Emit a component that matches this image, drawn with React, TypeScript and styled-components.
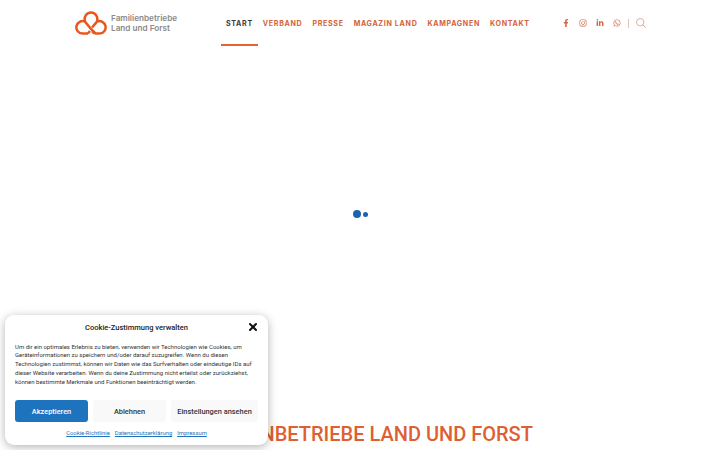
import styled, { createGlobalStyle } from "styled-components";
import { FaFacebookF, FaInstagram, FaLinkedinIn, FaWhatsapp } from "react-icons/fa";
import { X } from "lucide-react";

const GlobalStyle = createGlobalStyle`
    html, body {
        margin : 0;
        padding : 0;
        height : 100%;
        background-color : #ffffff;
        overflow : hidden;
    }
    #root {
        height : 100%;
    }
`;

const Page = styled.div`
    position : relative;
    display : flex;
    flex-direction : column;
    width : 720px;
    height : 450px;
    overflow : hidden;
    font-family : Roboto, "Liberation Sans", sans-serif;
`;

const Header = styled.header`
    display : flex;
    align-items : flex-start;
    height : 46px;
    padding-left : 75px;
`;

const LogoLink = styled.a`
    display : flex;
    align-items : center;
    gap : 4px;
    width : 146px;
    height : 46px;
    svg {
        width : 32px;
        height : 24px;
        flex-shrink : 0;
    }
`;

const LogoText = styled.span`
    margin-top : 1px;
    font-family : Inter, "Liberation Sans", sans-serif;
    font-size : 8.2px;
    font-weight : 600;
    line-height : 9.5px;
    color : #8a8a8a;
    white-space : nowrap;
`;

const Nav = styled.nav`
    display : flex;
    gap : 0;
`;

const NavItem = styled.a<{ $active?: boolean }>`
    display : flex;
    align-items : center;
    box-sizing : border-box;
    height : 46px;
    padding : 0 5px;
    font-family : Inter, "Liberation Sans", sans-serif;
    font-size : 7.1px;
    font-weight : 700;
    letter-spacing : 0.68px;
    white-space : nowrap;
    color : ${(p) => (p.$active ? "#3d3d3d" : "#d4623a")};
    box-shadow : ${(p) => (p.$active ? "inset 0 -2px 0 #e8602c" : "none")};
`;

const Socials = styled.div`
    display : flex;
    align-items : center;
    gap : 9px;
    height : 46px;
    margin-left : 27px;
`;

const SocialLink = styled.a`
    display : flex;
    justify-content : center;
    width : 8px;
    color : #d4663f;
    font-size : 8px;
`;

const Divider = styled.span`
    width : 1px;
    height : 9px;
    margin-left : -2px;
    background-color : #dcc4b8;
`;

const SearchIcon = styled.svg`
    width : 10px;
    height : 10px;
    margin-left : -2px;
    fill : none;
    stroke : #d9a48f;
    stroke-width : 0.9;
`;

const Loader = styled.div`
    display : flex;
    justify-content : center;
    align-items : center;
    gap : 2px;
    flex : 1;
    padding-bottom : 40px;
`;

const Dot = styled.span<{ $size: number }>`
    width : ${(p) => p.$size}px;
    height : ${(p) => p.$size}px;
    border-radius : 50%;
    background-color : #1b62b0;
`;

const Title = styled.h1`
    margin : 0 0 3px;
    font-size : 20px;
    font-weight : 500;
    line-height : 25px;
    text-align : center;
    color : #dd5f33;
    white-space : nowrap;
`;

const Banner = styled.section`
    position : absolute;
    left : 5px;
    top : 315px;
    display : flex;
    flex-direction : column;
    box-sizing : border-box;
    width : 263px;
    height : 130px;
    padding : 0 10px;
    border-radius : 9px;
    background-color : #ffffff;
    box-shadow : 0 2px 10px rgba(0, 0, 0, 0.3);
`;

const BannerHead = styled.div`
    position : relative;
    display : flex;
    justify-content : center;
    align-items : center;
    height : 23px;
    margin-top : 1px;
    font-size : 7.5px;
    font-weight : 500;
    color : #222222;
`;

const CloseButton = styled.span`
    position : absolute;
    right : -1px;
    top : 4.5px;
    display : flex;
    color : #111111;
`;

const BannerText = styled.p`
    margin : 3.5px 0 0;
    font-size : 6px;
    line-height : 8.75px;
    color : #333333;
    white-space : nowrap;
`;

const Buttons = styled.div`
    display : flex;
    gap : 5px;
    margin-top : 13.5px;
`;

const Button = styled.button<{ $primary?: boolean; $width: number }>`
    flex : 0 0 ${(p) => p.$width}px;
    height : 22.5px;
    padding : 0;
    border : none;
    border-radius : 3px;
    font-family : inherit;
    font-size : 7.4px;
    font-weight : 500;
    white-space : nowrap;
    color : ${(p) => (p.$primary ? "#ffffff" : "#333333")};
    background-color : ${(p) => (p.$primary ? "#1e73be" : "#f9f9f9")};
`;

const Links = styled.div`
    display : flex;
    justify-content : center;
    gap : 5px;
    margin-top : 5.5px;
`;

const PolicyLink = styled.a`
    font-size : 5.9px;
    line-height : 10px;
    color : #1e73be;
    text-decoration : underline;
`;

const Logo = () => (
    <svg viewBox="0 0 32 24" fill="none" stroke="#e8581c" strokeWidth="2.5" aria-hidden="true">
        <path d="M13 22.5H7.5A6.2 6.2 0 1 1 10 10.6C8.6 5.5 12 1.4 16 1.4S23.4 5.5 22 10.6A6.2 6.2 0 1 1 24.5 22.5H20.5L16 18L10 10.6M22 10.6L17 16.5" />
        <path d="M13 22.5L15 20M17 20L19.5 22.5" />
    </svg>
);

const navItems = ["VERBAND", "PRESSE", "MAGAZIN LAND", "KAMPAGNEN", "KONTAKT"];

const bannerLines = [
    "Um dir ein optimales Erlebnis zu bieten, verwenden wir Technologien wie Cookies, um",
    "Geräteinformationen zu speichern und/oder darauf zuzugreifen. Wenn du diesen",
    "Technologien zustimmst, können wir Daten wie das Surfverhalten oder eindeutige IDs auf",
    "dieser Website verarbeiten. Wenn du deine Zustimmung nicht erteilst oder zurückziehst,",
    "können bestimmte Merkmale und Funktionen beeinträchtigt werden.",
];

export default function App() {
    return (
        <Page>
            <GlobalStyle />
            <Header>
                <LogoLink>
                    <Logo />
                    <LogoText>
                        Familienbetriebe
                        <br />
                        Land und Forst
                    </LogoText>
                </LogoLink>
                <Nav>
                    <NavItem $active>START</NavItem>
                    {navItems.map((item) => (
                        <NavItem key={item}>{item}</NavItem>
                    ))}
                </Nav>
                <Socials>
                    <SocialLink><FaFacebookF /></SocialLink>
                    <SocialLink><FaInstagram /></SocialLink>
                    <SocialLink><FaLinkedinIn /></SocialLink>
                    <SocialLink><FaWhatsapp /></SocialLink>
                    <Divider />
                    <SearchIcon viewBox="0 0 10 10">
                        <circle cx="4.2" cy="4.2" r="3.7" />
                        <path d="M6.9 6.9L9.8 9.8" />
                    </SearchIcon>
                </Socials>
            </Header>
            <Loader>
                <Dot $size={8} />
                <Dot $size={5} />
            </Loader>
            <Title>FAMILIENBETRIEBE LAND UND FORST</Title>
            <Banner>
                <BannerHead>
                    Cookie-Zustimmung verwalten
                    <CloseButton><X size={12} strokeWidth={4} /></CloseButton>
                </BannerHead>
                <BannerText>
                    {bannerLines.map((line) => (
                        <span key={line}>
                            {line}
                            <br />
                        </span>
                    ))}
                </BannerText>
                <Buttons>
                    <Button $primary $width={73}>Akzeptieren</Button>
                    <Button $width={73}>Ablehnen</Button>
                    <Button $width={87}>Einstellungen ansehen</Button>
                </Buttons>
                <Links>
                    <PolicyLink>Cookie-Richtlinie</PolicyLink>
                    <PolicyLink>Datenschutzerklärung</PolicyLink>
                    <PolicyLink>Impressum</PolicyLink>
                </Links>
            </Banner>
        </Page>
    );
}
